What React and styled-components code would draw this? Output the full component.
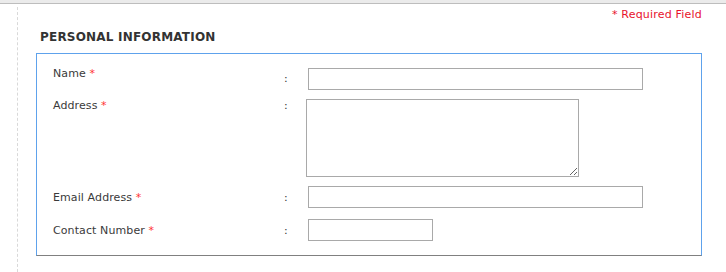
import styled, { createGlobalStyle } from "styled-components";

const GlobalStyle = createGlobalStyle`
  * {
    box-sizing: border-box;
  }
  body {
    margin: 0;
    background: #fff;
    font-family: Verdana, "DejaVu Sans", sans-serif;
  }
`;

const TopBar = styled.div`
  height: 4px;
  background: #ebebeb;
  border-bottom: 1px solid #bdbdbd;
`;

const Page = styled.div`
  margin: 3px 0 0 17px;
  min-height: 265px;
  border-left: 1px dashed #d9d9d9;
  padding: 1px 24px 0 0;
`;

const Required = styled.div`
  text-align: right;
  font-size: 11px;
  line-height: 13px;
  letter-spacing: 0.2px;
  color: #e8122c;
`;

const Heading = styled.h2`
  margin: 9px 0 8px 22px;
  font-size: 12px;
  line-height: 15px;
  font-weight: bold;
  letter-spacing: 0.2px;
  color: #333;
`;

const Panel = styled.div`
  margin-left: 18px;
  width: 666px;
  border: 1px solid #5ea2ec;
  border-bottom-color: #808080;
  padding: 13px 0 14px 16px;
  display: flex;
  flex-direction: column;
  gap: 9px;
`;

const Row = styled.div`
  display: grid;
  grid-template-columns: 231px 24px auto;
  align-items: ${(p) => p.$align || "center"};
  margin-top: ${(p) => p.$extra || 0}px;
`;

const Label = styled.label`
  align-self: ${(p) => (p.$top ? "start" : "auto")};
  font-size: 11px;
  line-height: 13px;
  letter-spacing: 0.1px;
  color: #3a3a3a;
`;

const Star = styled.span`
  color: #ff3333;
`;

const Colon = styled.span`
  font-size: 11px;
  line-height: 13px;
  color: #333;
`;

const Input = styled.input`
  display: block;
  width: ${(p) => p.$w}px;
  height: 22px;
  margin-top: ${(p) => p.$offset || 0}px;
  border: 1px solid #a9a9a9;
  padding: 0 3px;
  font: 11px Verdana, "DejaVu Sans", sans-serif;
  outline: none;
`;

const TextArea = styled.textarea`
  display: block;
  width: 273px;
  height: 78px;
  margin-left: -2px;
  border: 1px solid #a9a9a9;
  padding: 2px 3px;
  font: 11px Verdana, "DejaVu Sans", sans-serif;
  outline: none;
`;

export default function App() {
  return (
    <>
      <GlobalStyle />
      <TopBar />
      <Page>
        <Required>* Required Field</Required>
        <Heading>PERSONAL INFORMATION</Heading>
        <Panel>
          <Row>
            <Label $top>
              Name <Star>*</Star>
            </Label>
            <Colon>:</Colon>
            <Input type="text" $w={335} $offset={1} />
          </Row>
          <Row $align="start">
            <Label>
              Address <Star>*</Star>
            </Label>
            <Colon>:</Colon>
            <TextArea />
          </Row>
          <Row>
            <Label>
              Email Address <Star>*</Star>
            </Label>
            <Colon>:</Colon>
            <Input type="text" $w={335} />
          </Row>
          <Row $extra={2}>
            <Label>
              Contact Number <Star>*</Star>
            </Label>
            <Colon>:</Colon>
            <Input type="text" $w={125} />
          </Row>
        </Panel>
      </Page>
    </>
  );
}
